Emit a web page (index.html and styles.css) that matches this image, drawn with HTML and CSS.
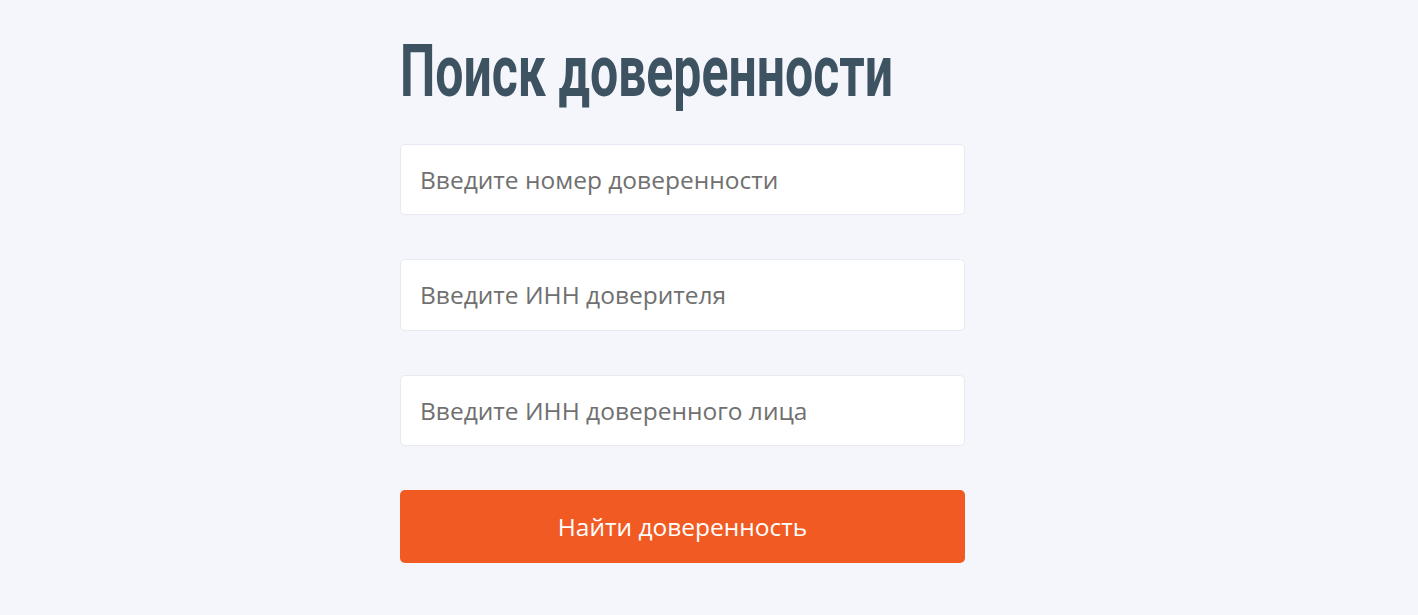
FILE: index.html
```
<!DOCTYPE html>
<html lang="ru">
<head>
<meta charset="utf-8">
<title>Поиск доверенности</title>
<link rel="stylesheet" href="styles.css">
</head>
<body>
	<div class="page">
		<form class="search">
			<h1 class="search-title"><span>Поиск доверенности</span></h1>
			<input class="field" type="text" placeholder="Введите номер доверенности">
			<input class="field" type="text" placeholder="Введите ИНН доверителя">
			<input class="field" type="text" placeholder="Введите ИНН доверенного лица">
			<button class="submit" type="button">Найти доверенность</button>
		</form>
	</div>
</body>
</html>
```

FILE: styles.css
```
*{
	margin:0;
	padding:0;
	box-sizing:border-box;
}
body{
	background:#F5F6FB;
	font-family:"Open Sans","Noto Sans",sans-serif;
}
.page{
	padding:36px 0 0 400px;
}
.search{
	width:565px;
	display:flex;
	flex-direction:column;
	gap:44px;
}
.search-title{
	font-family:Roboto,sans-serif;
	font-weight:bold;
	font-size:72px;
	line-height:72px;
	color:#3D5361;
	white-space:nowrap;
	margin-bottom:-8px;
}
.search-title span{
	display:inline-block;
	transform:scaleX(0.694);
	transform-origin:left center;
}
.field{
	height:71.3px;
	border:1px solid #E6E9F2;
	border-radius:5px;
	background:#fff;
	padding:0 19px;
	font-family:"Open Sans",sans-serif;
	font-size:24.5px;
	color:#333;
	outline:none;
}
.field::placeholder{
	color:#707070;
}
.submit{
	height:73px;
	border:0;
	border-radius:5px;
	background:#F15A22;
	color:#fff;
	font-family:"Open Sans",sans-serif;
	font-size:24.5px;
	cursor:pointer;
}
```
